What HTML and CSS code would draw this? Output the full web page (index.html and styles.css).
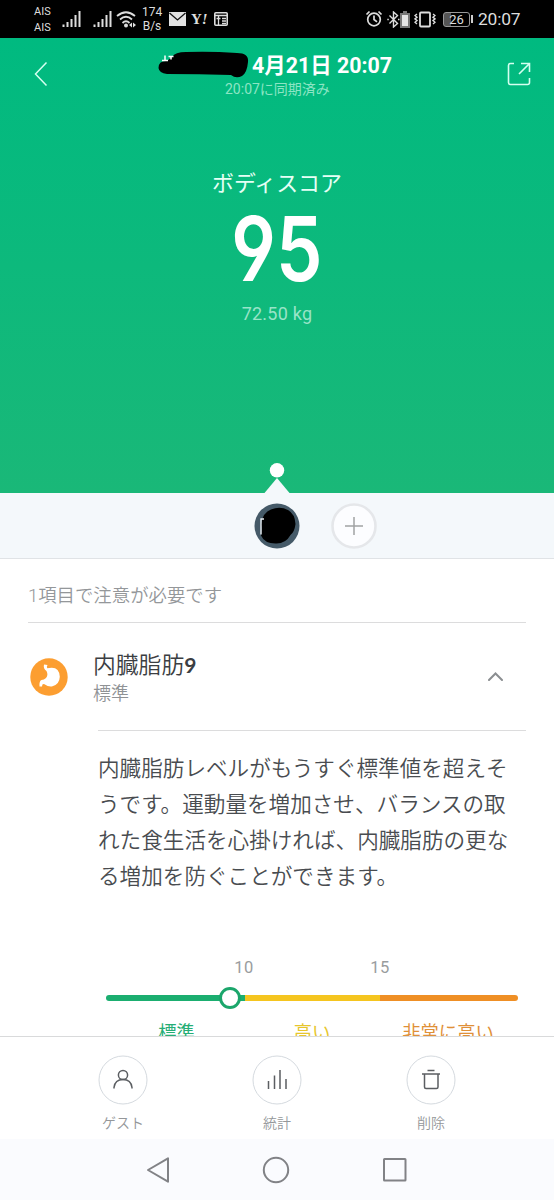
FILE: index.html
```html
<!DOCTYPE html>
<html lang="ja">
<head>
<meta charset="utf-8">
<title>ボディスコア</title>
<link rel="stylesheet" href="styles.css">
</head>
<body>
<div class="screen">
  <header class="status">
    <div class="carrier"><span>AIS</span><span>AIS</span></div>
    <svg class="signal" width="19" height="17" viewBox="0 0 19 17"><path d="M1.5 13.500v2.500M5.500 11v5M9.500 8v8M13.500 4v12M17.500 0v16"/></svg>
    <svg class="signal second" width="19" height="17" viewBox="0 0 19 17"><path d="M1.5 13.500v2.500M5.500 11v5M9.500 8v8M13.500 4v12M17.500 0v16"/></svg>
    <svg class="wifi" width="20" height="17" viewBox="0 0 20 17"><path class="line" d="M1 5Q10-2.500 19 5M4 8.500Q10 3 16 8.500M6.500 12Q10 8.500 13.500 12"/><circle cx="10" cy="14.500" r="2"/><path d="M13 14l3-2.500v5zM20 14l-3-2.500v5z"/></svg>
    <div class="rate"><span>174</span><span>B/s</span></div>
    <svg class="mail" width="17" height="14" viewBox="0 0 17 14"><path fill="#e2e2e2" d="M0 0h17v14H0z"/><path d="M.5 1l8 7 8-7" fill="none" stroke="#111" stroke-width="1.300"/></svg>
    <span class="yahoo">Y<i>!</i></span>
    <svg class="news" width="14" height="14" viewBox="0 0 14 14"><rect x=".8" y=".8" width="12.400" height="12.400" rx="1" fill="none" stroke="#ddd" stroke-width="1.600"/><path d="M1 3.500h12M2.500 6.500h4M4.500 4v9M8 6.500h4M8 9h4M8 11.500h4" stroke="#ddd" stroke-width="1.300" fill="none"/></svg>
    <svg class="alarm" width="18" height="18" viewBox="0 0 18 18"><circle cx="9" cy="9.500" r="6.300"/><path d="M9 5.500v4l3 2.300M1.500 4.500l3-3M16.500 4.500l-3-3"/></svg>
    <svg class="bluetooth" width="13" height="17" viewBox="0 0 13 17"><path d="M2.500 4.500l8 8-4 3.500V1l4 3.500-8 8M.3 8.500h1.500M11 8.500h1.500"/></svg>
    <svg class="cell" width="10" height="17" viewBox="0 0 10 17"><path fill="#777" d="M3 0h4v2h3v15H0V2h3z"/><path fill="#e4e4e4" d="M2 4h6v11H2z"/></svg>
    <svg class="vibrate" width="22" height="17" viewBox="0 0 22 17"><rect x="6" y="1.500" width="10" height="14" rx="1" stroke-width="1.800"/><path d="M3 3L1 4.500l2 1.700-2 1.700 2 1.700-2 1.700L3 13M19 3l2 1.500-2 1.700 2 1.700-2 1.700 2 1.700-2 1.700"/></svg>
    <div class="charge">26</div><i class="charge-tip"></i>
    <time class="clock">20:07</time>
  </header>

  <section class="hero">
    <div class="titlebar">
      <svg class="back" width="14" height="26" viewBox="0 0 14 26"><path d="M12.500 1.500L1.500 13l11 11.500"/></svg>
      <div class="title">
        <div class="title-row">
          <svg class="redacted" width="91" height="28" viewBox="0 0 91 28"><path d="M14 6Q17 1 28 1q24-1 51 1 12 0 11 9-1 11-6 14-6 3-11-1-32-1-64-1Q1 22 .5 17 .5 10 8 10q3-1 6-4z"/><path d="M4 9.500h6M7 4.500v5M10.500 5.500h5M13 5.500v3" stroke="#fff" stroke-width="1.500"/></svg>
          <h1>4月21日 20:07</h1>
        </div>
        <p class="sync">20:07に同期済み</p>
      </div>
      <svg class="share" width="24" height="24" viewBox="0 0 24 24"><path d="M7 1.500H3.500q-2 0-2 2v17q0 2 2 2h17q2 0 2-2V16M12 12L22.500 1.500M14 1.500h8.500V10"/></svg>
    </div>
    <h2 class="label">ボディスコア</h2>
    <div class="score">95</div>
    <div class="weight">72.50 kg</div>
    <svg class="pointer" width="26" height="31" viewBox="0 0 26 31"><circle cx="13" cy="8.300" r="7.200" fill="#fff"/><path d="M13 16L25.500 31H.5z" fill="#f4f8fb"/></svg>
  </section>

  <nav class="users">
    <svg width="46" height="46" viewBox="0 0 46 46"><circle cx="23" cy="23" r="22.500" fill="#455a68"/><path d="M17 6.500Q26 3 34 7q7 4 7.500 14-1 8-5 11-5 9-15 8.500-11 0-14.500-8 1-6 0-11Q9 9 17 6.500z"/><path d="M7 15.500v16M6.500 16H10" fill="none" stroke="#e8eef2" stroke-width="1.400"/></svg>
    <svg width="46" height="46" viewBox="0 0 46 46"><circle cx="23" cy="23" r="21.500" fill="#fcfdff" stroke="#e5e7ea" stroke-width="2.600"/><path d="M14 23h18M23 14v18" stroke="#a0a2a4" stroke-width="1.500"/></svg>
  </nav>

  <main class="content">
    <p class="notice">1項目で注意が必要です</p>
    <div class="metric">
      <svg width="38" height="38" viewBox="0 0 38 38"><circle cx="19" cy="19" r="18.700" fill="#fc9e31"/><path fill="#fff" d="M14 6.500q-1 4 2.500 6.500 2 4-.5 7-2 2-4.500 2-2.500 1-2 6.500H12q0-3 2.500-2.300 4 2.800 8 2 7-2 7.300-9.500-.5-9-8-9-3 0-4.500.5-1-1.500.2-3.200z"/></svg>
      <div class="metric-text"><h3>内臓脂肪<b>9</b></h3><p>標準</p></div>
      <svg class="chevron" width="15" height="9" viewBox="0 0 15 9"><path d="M1 8l6.500-6.500L14 8"/></svg>
    </div>
    <div class="detail">
      <p>内臓脂肪レベルがもうすぐ標準値を超えそ<br>うです。運動量を増加させ、バランスの取<br>れた食生活を心掛ければ、内臓脂肪の更な<br>る増加を防ぐことができます。</p>
      <div class="scale">
        <div class="ticks"><span></span><span>10</span><span>15</span></div>
        <div class="bar"><i class="low"></i><i class="mid"></i><i class="high"></i><b class="knob"></b></div>
        <div class="zones"><span class="z-low">標準</span><span class="z-mid">高い</span><span class="z-high">非常に高い</span></div>
      </div>
    </div>
  </main>

  <footer class="actions">
    <div class="action"><svg width="50" height="50" viewBox="0 0 50 50"><circle class="ring" cx="25" cy="25" r="24"/><circle cx="25" cy="20" r="4.600"/><path d="M16 33.500v-1q1-8 9-8t9 8v1"/></svg><span>ゲスト</span></div>
    <div class="action"><svg width="50" height="50" viewBox="0 0 50 50"><circle class="ring" cx="25" cy="25" r="24"/><path d="M16.500 26v8M22.500 20.500V34M28 15v19M34 24v10"/></svg><span>統計</span></div>
    <div class="action"><svg width="50" height="50" viewBox="0 0 50 50"><circle class="ring" cx="25" cy="25" r="24"/><path d="M21.500 15.500h7M16 19h18M18.500 19v13q0 1.500 1.500 1.500h10.500q1.500 0 1.500-1.500V19"/></svg><span>削除</span></div>
  </footer>
  <nav class="system">
    <svg width="24" height="28" viewBox="0 0 24 28"><path d="M2 14L22 2.300v23.400z"/></svg>
    <svg width="28" height="28" viewBox="0 0 28 28"><circle cx="14" cy="14" r="12.200"/></svg>
    <svg width="26" height="26" viewBox="0 0 26 26"><rect x="2" y="2" width="21.500" height="21.500" rx=".5"/></svg>
  </nav>
</div>
</body>
</html>
```

FILE: styles.css
```css
* { box-sizing: border-box; }
body, h1, h2, h3, p { margin: 0; font-weight: 400; }
body { font-family: Roboto, "Noto Sans CJK JP", sans-serif; background: #fff; }
svg { display: block; flex: none; }
.screen { width: 554px; height: 1200px; display: flex; flex-direction: column; overflow: hidden; }

.status { height: 38px; flex: none; display: flex; align-items: center; background: #000; color: #ddd; padding-left: 34px; }
.status svg { fill: none; stroke: #ddd; stroke-width: 1.4; }
.carrier, .rate { display: flex; flex-direction: column; font-size: 11.5px; }
.carrier { line-height: 16px; width: 18px; padding-top: 1px; font-size: 11px; }
.rate { width: 20px; margin-left: 6px; line-height: 14px; text-align: center; font-size: 12px; }
.status .signal { margin-left: 10px; stroke-width: 2; }
.status .second { margin-left: 12px; }
.status .wifi { margin-left: 4px; fill: #ddd; stroke: none; }
.status .wifi .line { fill: none; stroke: #ddd; stroke-width: 1.8; }
.status .mail { margin-left: 7px; stroke: none; }
.yahoo { width: 20px; margin-left: 5px; font: bold 15px/20px "Liberation Serif", serif; }
.status .news { margin-left: 3px; }
.status .alarm { margin-left: 137px; stroke-width: 1.7; }
.status .bluetooth { margin-left: 4px; }
.status .cell { margin-left: 0; stroke: none; }
.status .vibrate { margin-left: 4px; }
.charge { width: 27px; height: 15px; margin-left: 7px; border: 1px solid #999; border-radius: 3px; background: linear-gradient(90deg, #555 27%, #000 27%); font-size: 13px; line-height: 13px; text-align: center; }
.charge-tip { width: 2px; height: 8px; margin-left: 1px; background: #ccc; }
.clock { margin-left: 5px; font-size: 17.4px; letter-spacing: -.2px; }

.hero { height: 455px; flex: none; background: linear-gradient(#00ba80, #1ab878); color: #fff; display: flex; flex-direction: column; align-items: center; }
.titlebar { width: 554px; height: 72px; display: flex; align-items: flex-start; padding: 0 24px 0 34px; }
.back { margin-top: 23px; fill: none; stroke: #d5fff0; stroke-width: 1.5; }
.title { flex: 1; padding-top: 13px; }
.title-row { display: flex; padding-left: 110px; gap: 3px; height: 29px; }
.title h1 { font-size: 21.4px; font-weight: 700; line-height: 29px; white-space: nowrap; }
.sync { font-size: 14px; line-height: 18px; color: #8ce5c4; padding-left: 177px; }
.share { margin-top: 24px; margin-right: -1px; fill: none; stroke: #d5fff0; stroke-width: 1.6; }
.label { margin-top: 58px; font-size: 21.9px; line-height: 32px; color: #e5fff5; }
.score { margin-top: 2px; height: 94px; font: 600 89px/94px Inter, sans-serif; font-feature-settings: "ss01", "cv04"; transform: scaleX(.83); }
.weight { margin-top: 7px; font-size: 18px; line-height: 22px; letter-spacing: .25px; color: #98e4c8; }
.pointer { margin-top: auto; }

.users { height: 66px; flex: none; display: flex; align-items: center; gap: 31px; padding-left: 254px; background: #f4f8fb; border-bottom: 1px solid #e0e3e6; }

.content { height: 477px; flex: none; padding: 0 28px; overflow: hidden; }
.notice { height: 64px; padding-top: 23px; line-height: 28px; font-size: 18.4px; font-weight: 350; color: #94979a; border-bottom: 1px solid #dcdcdd; }
.metric { height: 107px; display: flex; align-items: center; padding: 0 23px 0 2px; }
.metric-text { flex: 1; padding: 4px 0 0 25px; }
.metric h3 { font-size: 22.8px; line-height: 29px; font-weight: 350; color: #3b3e42; }
.metric h3 b { font: 700 21px/29px Lato, sans-serif; }
.metric p { font-size: 18px; line-height: 27px; font-weight: 350; color: #8f9295; }
.chevron { fill: none; stroke: #8b8e91; stroke-width: 2; stroke-linecap: round; }
.detail { margin-left: 70px; border-top: 1px solid #dcdcdd; padding-top: 20px; }
.detail > p { font-size: 21.6px; line-height: 36px; color: #494c50; white-space: nowrap; font-weight: 350; }
.scale { margin: 62px 8px 0; }
.ticks { display: grid; grid-template-columns: 70px 136px 136px; line-height: 22px; font-size: 16.5px; letter-spacing: .6px; color: #999c9e; text-align: center; }
.bar { position: relative; display: flex; margin-top: 16px; height: 6px; border-radius: 3px; }
.bar i { height: 6px; }
.low { width: 139px; background: #1bae70; border-radius: 3px 0 0 3px; }
.mid { width: 135px; background: #f5c51f; }
.high { flex: 1; background: #ef8f25; border-radius: 0 3px 3px 0; }
.knob { position: absolute; left: 113px; top: -8px; width: 22px; height: 22px; border: 3px solid #1ba66b; border-radius: 50%; background: #fff; }
.zones { display: grid; grid-template-columns: 141px 130px 142px; margin-top: 19px; line-height: 26px; font-size: 18.3px; text-align: center; white-space: nowrap; }
.z-low { color: #25ad75; }
.z-mid { color: #e7c62d; }
.z-high { color: #df9038; }

.actions { height: 103px; flex: none; display: flex; justify-content: center; gap: 104px; border-top: 1px solid #d9dadb; padding-top: 18px; background: #fff; }
.action { width: 50px; display: flex; flex-direction: column; align-items: center; }
.action svg { fill: none; stroke: #5b5e62; stroke-width: 1.5; }
.action .ring { stroke: #d5dadf; stroke-width: 1; }
.action span { margin-top: 7px; font-size: 14px; line-height: 22px; font-weight: 350; color: #94979a; white-space: nowrap; }
.system { flex: 1; display: flex; align-items: center; padding-left: 146px; gap: 92px; background: #fafbfe; }
.system svg { fill: none; stroke: #818286; stroke-width: 2; stroke-linejoin: round; }
```
